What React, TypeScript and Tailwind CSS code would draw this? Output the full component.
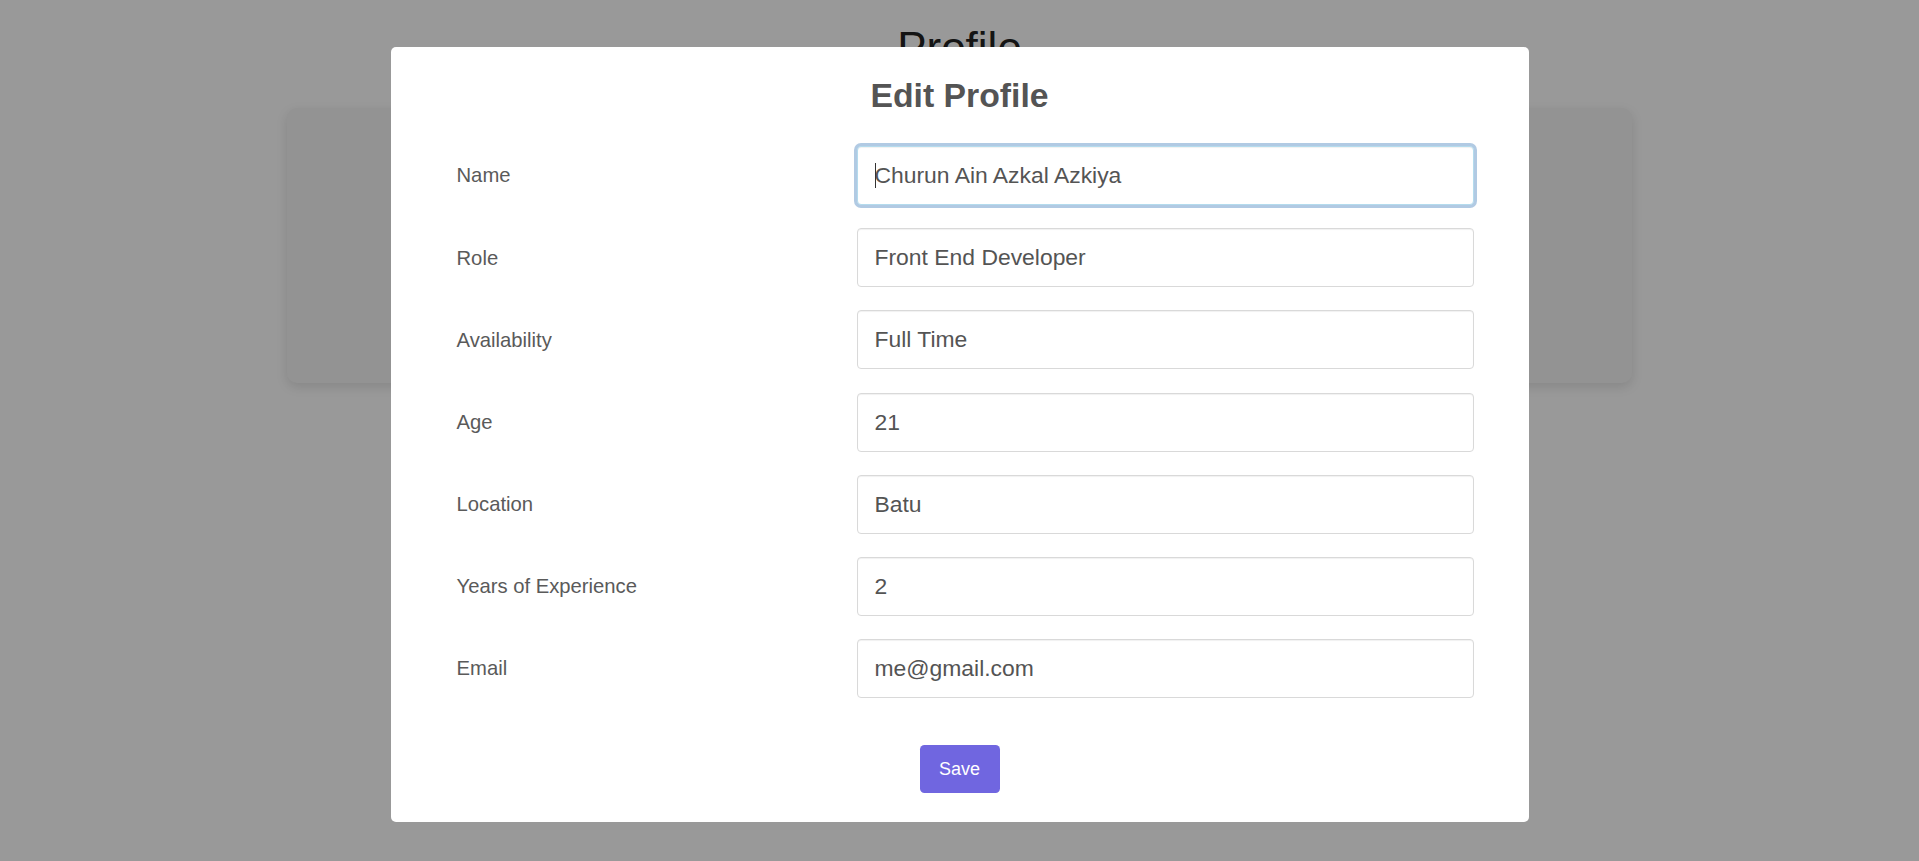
import { Fragment } from "react";

const fields = [
    { label: "Name", value: "Churun Ain Azkal Azkiya", focused: true },
    { label: "Role", value: "Front End Developer" },
    { label: "Availability", value: "Full Time" },
    { label: "Age", value: "21" },
    { label: "Location", value: "Batu" },
    { label: "Years of Experience", value: "2" },
    { label: "Email", value: "me@gmail.com" },
];

export default function App() {
    return (
        <div className="relative min-h-screen bg-white font-['Liberation_Sans',Arial,sans-serif]">
            {/* Page behind the dialog */}
            <div className="pt-[23px]">
                <h1 className="text-center text-[44px] leading-[50px] text-[#222]">Profile</h1>
                <div className="mx-auto mt-[35px] h-[275px] w-[1345px] rounded-[10px] bg-[#f5f5f5] shadow-[0_4px_12px_rgba(0,0,0,0.12)]" />
            </div>

            {/* Backdrop + modal */}
            <div className="fixed inset-0 bg-black/40 pt-[47px]">
                <div className="mx-auto w-[1138px] rounded-[5px] bg-white pt-[28px] pb-[29px]">
                    <h2 className="text-center text-[33.75px] font-semibold leading-[40px] text-[#545454]">
                        Edit Profile
                    </h2>

                    <div className="mt-[31px] grid grid-cols-[400px_617px] gap-y-[23.2px] pl-[66px]">
                        {fields.map((f) => (
                            <Fragment key={f.label}>
                                <label className="self-center text-[20.25px] text-[#5a5a5a]">{f.label}</label>
                                <div className="relative">
                                    <input
                                        value={f.value}
                                        readOnly
                                        className={`h-[59px] w-full rounded-[4px] border bg-white pl-[17px] pr-[17px] text-[22.9px] text-[#545454] outline-none caret-transparent ${f.focused
                                            ? "border-[#b4dbed] shadow-[inset_0_1px_1px_rgba(0,0,0,0.06),0_0_0_3px_rgba(100,150,200,0.5)]"
                                            : "border-[#d9d9d9] shadow-[inset_0_1px_1px_rgba(0,0,0,0.06)]"
                                            }`}
                                    />
                                    {f.focused && (
                                        <span className="absolute left-[18px] top-[17px] h-[25px] w-px bg-[#333]" />
                                    )}
                                </div>
                            </Fragment>
                        ))}
                    </div>

                    <div className="mt-[47px] flex justify-center">
                        <button className="h-[48px] w-[80px] rounded-[4.5px] bg-[#7066e0] text-[18px] font-medium text-white">
                            Save
                        </button>
                    </div>
                </div>
            </div>
        </div>
    );
}
